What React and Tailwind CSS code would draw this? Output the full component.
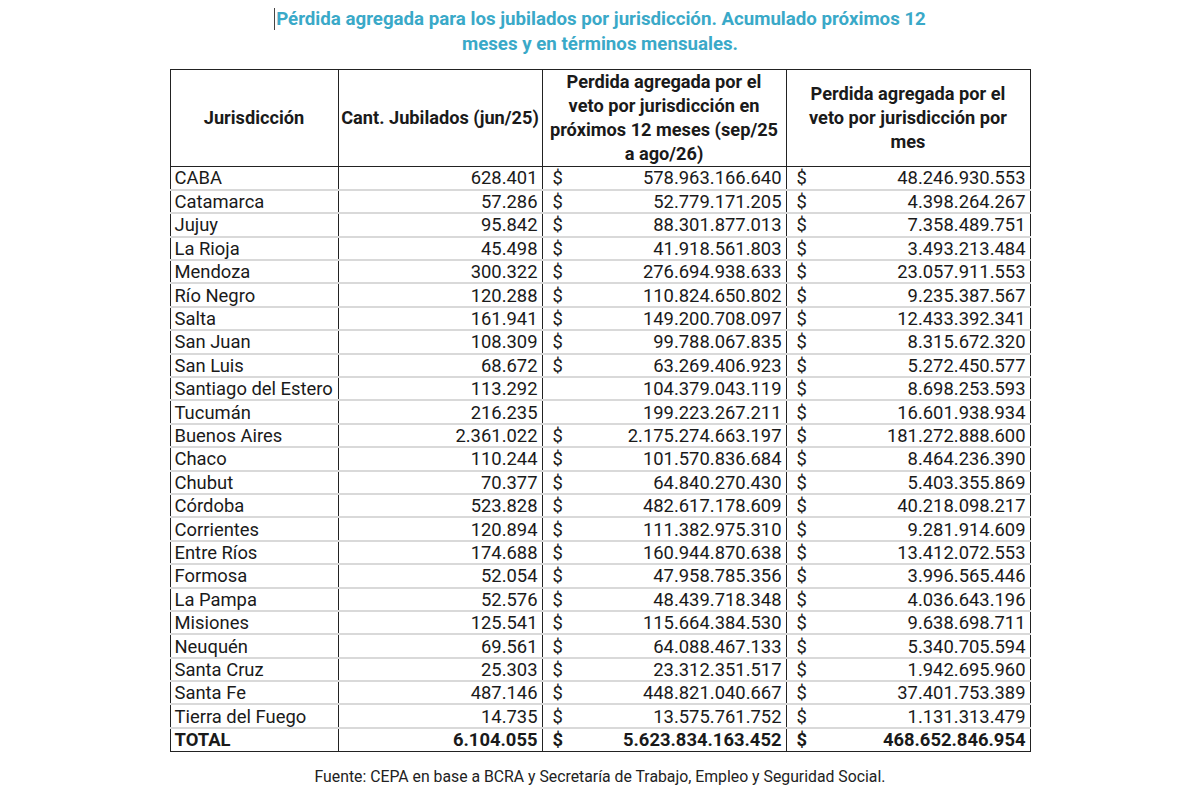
import React from 'react'

const rows = [
  ['CABA', '628.401', true, '578.963.166.640', '48.246.930.553'],
  ['Catamarca', '57.286', true, '52.779.171.205', '4.398.264.267'],
  ['Jujuy', '95.842', true, '88.301.877.013', '7.358.489.751'],
  ['La Rioja', '45.498', true, '41.918.561.803', '3.493.213.484'],
  ['Mendoza', '300.322', true, '276.694.938.633', '23.057.911.553'],
  ['Río Negro', '120.288', true, '110.824.650.802', '9.235.387.567'],
  ['Salta', '161.941', true, '149.200.708.097', '12.433.392.341'],
  ['San Juan', '108.309', true, '99.788.067.835', '8.315.672.320'],
  ['San Luis', '68.672', true, '63.269.406.923', '5.272.450.577'],
  ['Santiago del Estero', '113.292', false, '104.379.043.119', '8.698.253.593'],
  ['Tucumán', '216.235', false, '199.223.267.211', '16.601.938.934'],
  ['Buenos Aires', '2.361.022', true, '2.175.274.663.197', '181.272.888.600'],
  ['Chaco', '110.244', true, '101.570.836.684', '8.464.236.390'],
  ['Chubut', '70.377', true, '64.840.270.430', '5.403.355.869'],
  ['Córdoba', '523.828', true, '482.617.178.609', '40.218.098.217'],
  ['Corrientes', '120.894', true, '111.382.975.310', '9.281.914.609'],
  ['Entre Ríos', '174.688', true, '160.944.870.638', '13.412.072.553'],
  ['Formosa', '52.054', true, '47.958.785.356', '3.996.565.446'],
  ['La Pampa', '52.576', true, '48.439.718.348', '4.036.643.196'],
  ['Misiones', '125.541', true, '115.664.384.530', '9.638.698.711'],
  ['Neuquén', '69.561', true, '64.088.467.133', '5.340.705.594'],
  ['Santa Cruz', '25.303', true, '23.312.351.517', '1.942.695.960'],
  ['Santa Fe', '487.146', true, '448.821.040.667', '37.401.753.389'],
  ['Tierra del Fuego', '14.735', true, '13.575.761.752', '1.131.313.479'],
]

function Money({ show, value, bold }) {
  return (
    <div className={'flex justify-between pl-[10px] pr-[4px] ' + (bold ? 'font-bold' : '')}>
      <span>{show ? '$' : ''}</span>
      <span>{value}</span>
    </div>
  )
}

export default function App() {
  return (
    <div className="w-[1200px] h-[800px] bg-white text-[#1a1a1a] font-['Roboto',sans-serif] flex flex-col items-center">
      <h1 className="mt-[7px] text-center text-[18.7px] leading-[25px] font-bold text-[#3aa9c8]">
        <span className="border-l border-[#444] pl-[1px]">Pérdida agregada para los jubilados por jurisdicción. Acumulado próximos 12</span>
        <br />
        meses y en términos mensuales.
      </h1>

      <table className="mt-[12px] w-[860px] border-collapse border-[1.5px] border-[#222] text-[18.4px] leading-[21px] table-fixed">
        <colgroup>
          <col className="w-[168px]" />
          <col className="w-[204px]" />
          <col className="w-[244px]" />
          <col className="w-[244px]" />
        </colgroup>
        <thead>
          <tr className="h-[95px] text-[18.2px] leading-[24px] font-bold border-b-[1.5px] border-[#222] whitespace-nowrap">
            <th className="border-r-[1.5px] border-[#222] font-bold">Jurisdicción</th>
            <th className="border-r-[1.5px] border-[#222] font-bold">Cant. Jubilados (jun/25)</th>
            <th className="border-r-[1.5px] border-[#222] font-bold">
              Perdida agregada por el<br />veto por jurisdicción en<br />próximos 12 meses (sep/25<br />a ago/26)
            </th>
            <th className="font-bold">
              Perdida agregada por el<br />veto por jurisdicción por<br />mes
            </th>
          </tr>
        </thead>
        <tbody>
          {rows.map((r, i) => (
            <tr key={i} className="h-[23.4px] border-b-2 border-[#d9d9d9] last:border-b-0">
              <td className="pl-[4px] border-r-[1.5px] border-r-[#222] whitespace-nowrap">{r[0]}</td>
              <td className="pr-[4px] text-right border-r-[1.5px] border-r-[#222]">{r[1]}</td>
              <td className="border-r-[1.5px] border-r-[#222]"><Money show={r[2]} value={r[3]} /></td>
              <td><Money show={true} value={r[4]} /></td>
            </tr>
          ))}
          <tr className="h-[23.4px] border-t-[1.5px] border-[#222] font-bold">
            <td className="pl-[4px] border-r-[1.5px] border-[#222]">TOTAL</td>
            <td className="pr-[4px] text-right border-r-[1.5px] border-[#222]">6.104.055</td>
            <td className="border-r-[1.5px] border-[#222]"><Money show={true} value="5.623.834.163.452" bold /></td>
            <td><Money show={true} value="468.652.846.954" bold /></td>
          </tr>
        </tbody>
      </table>

      <p className="mt-[15px] text-[15.8px] leading-[20px] text-[#222]">
        Fuente: CEPA en base a BCRA y Secretaría de Trabajo, Empleo y Seguridad Social.
      </p>
    </div>
  )
}
